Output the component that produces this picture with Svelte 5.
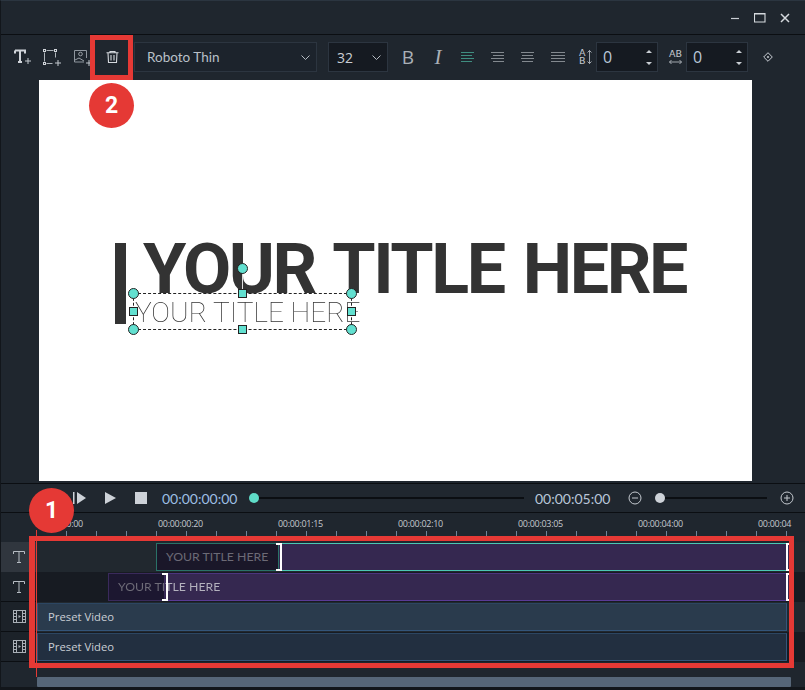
<script>
  const ticks = Array.from({ length: 26 }, (_, i) => i);
  const labels = ['00:00:00:00', '00:00:00:20', '00:00:01:15', '00:00:02:10', '00:00:03:05', '00:00:04:00', '00:00:04'];
</script>

{#snippet tIcon()}
  <svg class="t-icon" width="12" height="12" viewBox="0 0 12 12" fill="none" stroke="#b6bcc3"><path d="M.5 3V.5h11V3M6 .5v11M4 11.500h4"/></svg>
{/snippet}

<div class="window">
  <header class="titlebar">
    <svg class="winbtn" width="12" height="12" viewBox="0 0 12 12"><path d="M1 6.500h8" stroke="#c9ced4" stroke-width="1.200"/></svg>
    <svg class="winbtn" width="12" height="12" viewBox="0 0 12 12"><path d="M.5 1.500h10.500v8.500H.5zM.5 2h10.500" fill="none" stroke="#d5d9de" stroke-width="1.100"/></svg>
    <svg class="winbtn last" width="12" height="12" viewBox="0 0 12 12"><path d="M2 2l8 8M10 2l-8 8" stroke="#d5d9de" stroke-width="1.500"/></svg>
  </header>

  <div class="toolbar">
    <div class="tool-icons">
      <svg width="18" height="16" viewBox="0 0 18 16"><path d="M1 1.500h10v3M1 1.500v3M6 1.500v11.500M4 13h4" fill="none" stroke="#d0d4d9" stroke-width="2"/><path d="M11 12h6M14 9v6" stroke="#c4c9cf" stroke-width="1"/></svg>
      <svg width="19" height="17" viewBox="0 0 19 17" fill="none"><path d="M3.500 1.500h7M1.500 3.500v9M12.500 3.500v5M3.500 14.500h6" stroke="#aeb4ba"/><rect x=".5" y=".5" width="2" height="2" stroke="#d0d4d9"/><rect x="11.500" y=".5" width="2" height="2" stroke="#d0d4d9"/><rect x=".5" y="13.500" width="2" height="2" stroke="#d0d4d9"/><path d="M12 14h6M15 11v6" stroke="#c4c9cf"/></svg>
      <svg width="19" height="17" viewBox="0 0 19 17"><path d="M11 13H1.500V1.500h12V9" fill="none" stroke="#8f969e"/><circle cx="7.500" cy="5" r="1.800" fill="none" stroke="#9aa0a7"/><path d="M2 11l4-2 5 3" fill="none" stroke="#9aa0a7"/><path d="M13 14h6M16 11v6" stroke="#c4c9cf"/></svg>
    </div>
    <svg class="trash" width="13" height="12" viewBox="0 0 13 12"><path d="M.5 1.800h12M4 1.800V.5h5v1.300M2 1.800l.5 9.700h8l.5-9.700M5 4v5.500M8 4v5.500" fill="none" stroke="#d5d9de" stroke-width="1.100"/></svg>

    <div class="select font-select">
      <span>Roboto Thin</span>
      <svg width="9" height="5" viewBox="0 0 9 5"><path d="M.5 .5l4 4 4-4" fill="none" stroke="#b6bcc3"/></svg>
    </div>
    <div class="select size-select">
      <span>32</span>
      <svg width="9" height="5" viewBox="0 0 9 5"><path d="M.5 .5l4 4 4-4" fill="none" stroke="#b6bcc3"/></svg>
    </div>

    <span class="fmt bold">B</span>
    <span class="fmt italic">I</span>

    <div class="aligns">
      <svg width="14" height="10" viewBox="0 0 14 10"><path d="M0 .5h13M0 3.500h11M0 6.500h13M0 9.500h11" stroke="#3f8d80"/></svg>
      <svg width="14" height="10" viewBox="0 0 14 10"><path d="M0 .5h13M2 3.500h11M0 6.500h13M2 9.500h11" stroke="#83898f"/></svg>
      <svg width="14" height="10" viewBox="0 0 14 10"><path d="M0 .5h13M1 3.500h11M0 6.500h13M1 9.500h11" stroke="#83898f"/></svg>
      <svg width="14" height="10" viewBox="0 0 14 10"><path d="M0 .5h14M0 3.500h14M0 6.500h14M0 9.500h14" stroke="#83898f"/></svg>
    </div>

    <div class="spacing line">
      <span class="stack">A<br />B</span>
      <svg width="5" height="14" viewBox="0 0 5 14"><path d="M2.500 .5v13M.5 2.500l2-2 2 2M.5 11.500l2 2 2-2" fill="none" stroke="#c4c9cf" stroke-width=".8"/></svg>
    </div>
    <div class="spin">
      <span>0</span>
      <div class="arrows"><i class="up"></i><i class="down"></i></div>
    </div>
    <div class="spacing letter">
      <span class="pair">AB</span>
      <svg width="13" height="6" viewBox="0 0 13 6"><path d="M.5 3h12M2.500 1l-2 2 2 2M10.500 1l2 2-2 2" fill="none" stroke="#c4c9cf" stroke-width=".8"/></svg>
    </div>
    <div class="spin">
      <span>0</span>
      <div class="arrows"><i class="up"></i><i class="down"></i></div>
    </div>
    <svg class="keyframe" width="10" height="10" viewBox="0 0 10 10"><path d="M5 .7L9.300 5 5 9.300.7 5z" fill="none" stroke="#c9ced4"/><path d="M5 3.700L6.300 5 5 6.300 3.700 5z" fill="#c9ced4"/></svg>
  </div>

  <div class="preview">
    <div class="canvas">
      <div class="caret"></div>
      <div class="big-title">YOUR TITLE HERE</div>
      <div class="selection">
        <span class="thin-title">YOUR TITLE HERE</span>
        <i class="stem"></i>
        <i class="rotate"></i>
        <i class="dot tl"></i><i class="dot tr"></i><i class="dot bl"></i><i class="dot br"></i>
        <i class="sq tm"></i><i class="sq bm"></i><i class="sq ml"></i><i class="sq mr"></i>
      </div>
    </div>
  </div>

  <div class="transport">
    <svg class="step" width="13" height="12" viewBox="0 0 13 12"><path d="M0 0h1.500v12H0z" fill="#cdd2d8"/><path d="M4 0l9 6-9 6z" fill="#cdd2d8"/></svg>
    <svg class="play" width="11" height="12" viewBox="0 0 11 12"><path d="M0 0l11 6-11 6z" fill="#cdd2d8"/></svg>
    <span class="stop"></span>
    <span class="time">00:00:00:00</span>
    <div class="slider seek"><i class="knob teal"></i></div>
    <span class="time end">00:00:05:00</span>
    <svg class="zoom-btn minus" width="14" height="14" viewBox="0 0 14 14"><circle cx="7" cy="7" r="6" fill="none" stroke="#c4c9cf"/><path d="M4 7h6" stroke="#c4c9cf"/></svg>
    <div class="slider zoomer"><i class="knob grey"></i></div>
    <svg class="zoom-btn" width="14" height="14" viewBox="0 0 14 14"><circle cx="7" cy="7" r="6" fill="none" stroke="#c4c9cf"/><path d="M4 7h6M7 4v6" stroke="#c4c9cf"/></svg>
  </div>

  <div class="ruler">
    <div class="labels">
      {#each labels as label}
        <span>{label}</span>
      {/each}
    </div>
    <div class="ticks">
      {#each ticks as t (t)}
        <i></i>
      {/each}
    </div>
  </div>

  <div class="tracks">
    <div class="track t1">
      <div class="head">{@render tIcon()}</div>
      <div class="lane">
        <div class="clip title-clip teal-clip">
          <div class="clip-dark"><span>YOUR TITLE HERE</span></div>
          <i class="bracket"></i>
          <div class="clip-rest"></div>
          <i class="bracket end"></i>
        </div>
      </div>
    </div>
    <div class="track t2">
      <div class="head">{@render tIcon()}</div>
      <div class="lane">
        <div class="clip title-clip purple-clip">
          <div class="clip-dark"></div>
          <i class="bracket"></i>
          <div class="clip-rest"></div>
          <i class="bracket end"></i>
          <span class="over-label">YOUR TITLE HERE</span>
        </div>
      </div>
    </div>
    {#each ['v1', 'v2'] as v}
      <div class="track video {v}">
        <div class="head">
          <svg width="13" height="13" viewBox="0 0 13 13" fill="none" stroke="#a9afb6"><rect x=".5" y=".5" width="12" height="12"/><path d="M3.500 .5v12M9.500 .5v12M.5 3.500h3M.5 6.500h3M.5 9.500h3M9.500 3.500h3M9.500 6.500h3M9.500 9.500h3"/><path d="M5.500 5l2.500 1.500L5.500 8z" fill="#a9afb6" stroke="none"/></svg>
        </div>
        <div class="lane"><div class="clip video-clip">Preset Video</div></div>
      </div>
    {/each}
  </div>

  <div class="scroll-row"><div class="scrollbar"></div></div>

  <i class="playhead"></i>
  <div class="mark mark-tracks"></div>
  <div class="mark mark-trash"></div>
  <div class="badge badge-1">1</div>
  <div class="badge badge-2">2</div>
</div>

<style>
  :global(body) {
    margin: 0;
    background: #1f262e;
  }

  .window {
    position: relative;
    width: 805px;
    height: 690px;
    overflow: hidden;
    display: flex;
    flex-direction: column;
    box-sizing: border-box;
    background: #1f262e;
    border-left: 1px solid #12161b;
    border-top: 1px solid #2b3540;
    font-family: "Open Sans", sans-serif;
    color: #c9ced4;
  }

  .titlebar {
    height: 34px;
    flex: none;
    display: flex;
    justify-content: flex-end;
    align-items: center;
    gap: 12px;
    padding: 0 14px 0 0;
    box-sizing: border-box;
    border-bottom: 1px solid #0b0e12;
  }

  .titlebar .last {
    margin-left: 1px;
  }

  .toolbar {
    height: 45px;
    flex: none;
    display: flex;
    align-items: center;
    padding: 0 0 1px 13px;
    box-sizing: border-box;
  }

  .tool-icons {
    display: flex;
    gap: 11px;
    width: 78px;
    flex: none;
  }

  .trash {
    margin: 0 14px 0 14px;
    flex: none;
  }

  .select {
    display: flex;
    align-items: center;
    justify-content: space-between;
    height: 30px;
    box-sizing: border-box;
    border: 1px solid #2c3540;
    font-size: 13px;
  }

  .font-select {
    width: 183px;
    margin-left: 1px;
    padding: 0 6px 0 12px;
    background: #1c232c;
    color: #b9c0c8;
    font-family: Lato, sans-serif;
    font-size: 13.500px;
  }

  .size-select {
    width: 60px;
    margin-left: 11px;
    padding: 0 6px 0 8px;
    background: #151a21;
    font-size: 14px;
  }

  .fmt {
    width: 30px;
    text-align: center;
    font-size: 19px;
    color: #aab0b7;
    flex: none;
  }

  .bold {
    margin-left: 5px;
  }

  .italic {
    font-family: "Liberation Serif", serif;
    font-style: italic;
    font-size: 21px;
  }

  .aligns {
    display: flex;
    gap: 16px;
    margin-left: 8px;
    width: 104px;
    flex: none;
  }

  .spacing {
    display: flex;
    align-items: center;
    color: #c4c9cf;
    font-size: 9.500px;
    line-height: 8px;
    font-family: "DejaVu Sans", sans-serif;
    flex: none;
  }

  .line {
    gap: 1px;
    margin-left: 14px;
    width: 17px;
  }

  .stack {
    text-align: center;
  }

  .letter {
    flex-direction: column;
    width: 13px;
    margin: 0 4px 0 11px;
    gap: 1px;
  }

  .spin {
    width: 62px;
    height: 30px;
    flex: none;
    box-sizing: border-box;
    display: flex;
    align-items: center;
    justify-content: space-between;
    padding: 0 5px 0 6px;
    background: #151a21;
    border: 1px solid #2c3540;
    font-size: 16px;
    color: #b9c6d8;
  }

  .arrows {
    display: flex;
    flex-direction: column;
    gap: 9px;
  }

  .arrows i {
    width: 0;
    height: 0;
    border-left: 3px solid transparent;
    border-right: 3px solid transparent;
  }

  .arrows .up {
    border-bottom: 3px solid #c9ced4;
  }

  .arrows .down {
    border-top: 3px solid #c9ced4;
  }

  .keyframe {
    margin-left: 15px;
    flex: none;
  }

  .preview {
    height: 404px;
    flex: none;
    padding-left: 38px;
    box-sizing: border-box;
    border-bottom: 1px solid #0b0e12;
  }

  .canvas {
    position: relative;
    width: 713px;
    height: 401px;
    background: #fff;
    overflow: hidden;
  }

  .caret {
    position: absolute;
    left: 76px;
    top: 163px;
    width: 11px;
    height: 81px;
    background: #333;
  }

  .big-title {
    position: absolute;
    left: 104px;
    top: 148px;
    font: 700 70px/82px Roboto, sans-serif;
    letter-spacing: -2.400px;
    word-spacing: 4px;
    color: #333;
    white-space: nowrap;
  }

  .selection {
    position: absolute;
    left: 94px;
    top: 213px;
    width: 219px;
    height: 37px;
    box-sizing: border-box;
    border: 1px dashed #222;
  }

  .thin-title {
    position: absolute;
    left: 1px;
    top: 0;
    font: 100 28px/37px Roboto, sans-serif;
    color: #333;
    white-space: nowrap;
    will-change: transform;
  }

  .stem {
    position: absolute;
    left: 108px;
    top: -20px;
    width: 1px;
    height: 20px;
    background: #ddd;
  }

  .rotate,
  .dot {
    position: absolute;
    width: 11px;
    height: 11px;
    box-sizing: border-box;
    border-radius: 50%;
    background: #62e0d0;
    border: 1px solid #222;
  }

  .rotate {
    left: 103px;
    top: -31px;
  }

  .tl { left: -6px; top: -6px; }
  .tr { right: -6px; top: -6px; }
  .bl { left: -6px; bottom: -6px; }
  .br { right: -6px; bottom: -6px; }

  .sq {
    position: absolute;
    width: 9px;
    height: 9px;
    box-sizing: border-box;
    background: #62e0d0;
    border: 1px solid #222;
  }

  .tm { left: 104px; top: -5px; }
  .bm { left: 104px; bottom: -5px; }
  .ml { left: -5px; top: 13px; }
  .mr { right: -5px; top: 13px; }

  .transport {
    height: 29px;
    flex: none;
    display: flex;
    align-items: center;
    box-sizing: border-box;
    border-bottom: 1px solid #0b0e12;
    background: #20272f;
  }

  .step {
    margin-left: 72px;
    flex: none;
  }

  .play {
    margin-left: 19px;
    flex: none;
  }

  .stop {
    width: 12px;
    height: 12px;
    margin-left: 19px;
    background: #cdd2d8;
    flex: none;
  }

  .time {
    margin-left: 15px;
    font-family: Lato, sans-serif;
    font-size: 14px;
    color: #9dbfe4;
    width: 76px;
    flex: none;
  }

  .time.end {
    margin-left: 11px;
    color: #b9c6d8;
  }

  .slider {
    position: relative;
    height: 2px;
    background: #0b0e12;
    flex: none;
  }

  .seek {
    width: 270px;
    margin-left: 16px;
  }

  .zoomer {
    width: 107px;
    margin-left: 18px;
  }

  .zoom-btn {
    flex: none;
    margin-left: 13px;
  }

  .zoom-btn.minus {
    margin-left: 17px;
  }

  .knob {
    position: absolute;
    left: -5px;
    top: -4px;
    width: 10px;
    height: 10px;
    border-radius: 50%;
  }

  .teal {
    background: #5fdcc8;
  }

  .grey {
    background: #cdd2d8;
  }

  .ruler {
    height: 29px;
    flex: none;
    position: relative;
    box-sizing: border-box;
    padding: 5px 0 0 35px;
    background: #1f262e;
  }

  .labels {
    display: flex;
    font-family: "Open Sans", sans-serif;
    font-size: 9px;
    line-height: 12px;
    letter-spacing: -0.300px;
    color: #c4c9cf;
  }

  .labels span {
    width: 120px;
    padding-left: 2px;
    box-sizing: border-box;
    flex: none;
  }

  .ticks {
    display: flex;
    margin-top: 1px;
  }

  .ticks i {
    width: 30px;
    height: 5px;
    box-sizing: border-box;
    border-left: 1px solid #6f8599;
    flex: none;
  }

  .tracks {
    flex: none;
    display: flex;
    flex-direction: column;
  }

  .track {
    display: flex;
    height: 30px;
  }

  .head {
    width: 36px;
    flex: none;
    display: flex;
    align-items: center;
    justify-content: center;
    box-sizing: border-box;
    background: #1c2229;
    border-bottom: 1px solid #0b0e12;
  }

  .t1 .head {
    background: #30363e;
    border-bottom: none;
  }

  .t-icon {
    margin-right: 1px;
  }

  .lane {
    flex: 1;
    position: relative;
    background: #171b22;
  }

  .t1 .lane,
  .v1 .lane {
    background: #21282f;
  }

  .clip {
    position: absolute;
    top: 1px;
    bottom: 1px;
    box-sizing: border-box;
    display: flex;
  }

  .title-clip {
    right: 16px;
  }

  .teal-clip {
    left: 119px;
  }

  .purple-clip {
    left: 71px;
  }

  .clip-dark {
    flex: none;
    box-sizing: border-box;
    display: flex;
    align-items: center;
    padding: 0 0 2px 9px;
    font-family: Lato, sans-serif;
    font-size: 12.300px;
    color: #6c6a76;
    white-space: nowrap;
  }

  .teal-clip .clip-dark {
    width: 123px;
    background: #1a1729;
    border: 1px solid #2a7268;
  }

  .purple-clip .clip-dark {
    width: 57px;
    background: #1c1730;
    border: 1px solid #3a2a5c;
  }

  .clip-rest {
    flex: 1;
    background: #352850;
    box-sizing: border-box;
  }

  .teal-clip .clip-rest {
    border-top: 1px solid #4bc8b4;
    border-bottom: 1px solid #4bc8b4;
  }

  .purple-clip .clip-rest {
    border-top: 1px solid #4c3580;
    border-bottom: 1px solid #5a3b96;
  }

  .bracket {
    width: 6px;
    flex: none;
    box-sizing: border-box;
    margin-left: -3px;
    margin-right: -3px;
    border: 2px solid #fff;
    border-left: none;
    z-index: 1;
  }

  .bracket.end {
    width: 3px;
    margin-right: 0;
    margin-left: -3px;
    border-left: 2px solid #fff;
    border-right: none;
  }

  .over-label {
    position: absolute;
    left: 10px;
    top: 6px;
    line-height: 15px;
    font-family: Lato, sans-serif;
    font-size: 12.300px;
    background: linear-gradient(90deg, #6e6c78 46px, #b4b2be 46px);
    -webkit-background-clip: text;
    background-clip: text;
    color: transparent;
    white-space: nowrap;
  }

  .video-clip {
    left: 0;
    right: 18px;
    align-items: center;
    padding: 0 0 2px 10px;
    font-size: 11.300px;
    color: #c9ced4;
    border: 1px solid #34557a;
    border-top-color: #2c4662;
  }

  .v1 .video-clip {
    background: #2a3b4d;
  }

  .v2 .video-clip {
    background: #222f40;
  }

  .scroll-row {
    flex: 1;
    display: flex;
    align-items: flex-end;
    padding: 0 14px 0 36px;
    border-bottom: 3px solid #12161b;
  }

  .scrollbar {
    flex: 1;
    height: 10px;
    border-radius: 1px;
    background: #566678;
  }

  .playhead {
    position: absolute;
    left: 35px;
    top: 529px;
    width: 1px;
    height: 147px;
    background: #e53935;
  }

  .mark {
    position: absolute;
    box-sizing: border-box;
    border: 5px solid #e53935;
  }

  .mark-tracks {
    left: 28px;
    top: 535px;
    width: 765px;
    height: 132px;
    border-left-width: 6px;
  }

  .mark-trash {
    left: 89px;
    top: 34px;
    width: 43px;
    height: 45px;
  }

  .badge {
    position: absolute;
    width: 45px;
    height: 45px;
    border-radius: 50%;
    display: flex;
    align-items: center;
    justify-content: center;
    background: #e53935;
    color: #fff;
    font: 700 23px Roboto, sans-serif;
  }

  .badge-1 {
    left: 28px;
    top: 487px;
  }

  .badge-2 {
    left: 88px;
    top: 82px;
  }
</style>
